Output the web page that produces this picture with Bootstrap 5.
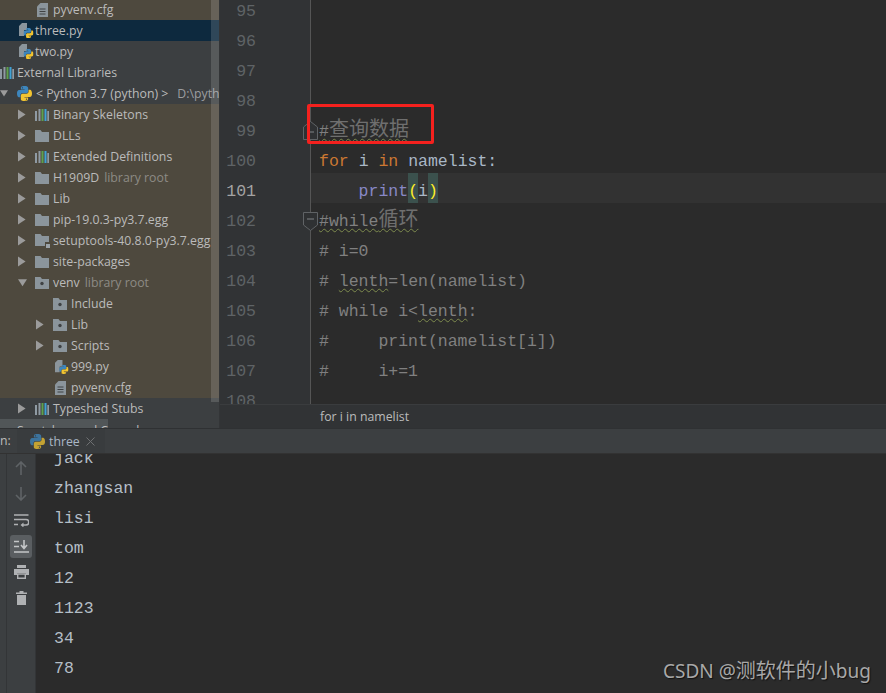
<!DOCTYPE html>
<html lang="en">
<head>
<meta charset="utf-8">
<title>PyCharm</title>
<link rel="stylesheet" href="https://cdn.jsdelivr.net/npm/bootstrap@5.3.0/dist/css/bootstrap.min.css">
<style>
html,body{margin:0;background:#2b2b2b;overflow:hidden}
.ide{width:886px;height:693px;overflow:hidden;position:relative;font-family:"Open Sans","Noto Sans CJK SC",sans-serif;color:#bbb}
.top-area{height:429px;flex:none;border-bottom:1px solid #2f3133}
.tree{width:220px;flex:none;background:#3c3f41;overflow:hidden;position:relative;border-right:1px solid #333537;padding-top:0}
.tree-scroll{position:absolute;left:211px;top:0;width:8px;height:402px;background:rgba(255,255,255,.14)}
.node{height:21px;font-size:12.3px;line-height:21px;white-space:nowrap;flex:none}
.node:first-child{margin-top:-1px}
.brown{background:#4e493e}
.sel{background:#0d293e}
.ind-0{padding-left:0}.ind-1{padding-left:18px}.ind-1f{padding-left:35px}.ind-2{padding-left:36px}.ind-2f{padding-left:53px}
.slot-ar{width:17px;flex:none;display:flex;align-items:center}
.slot-ic{width:18px;flex:none;display:flex;align-items:center}
.slot-ic-lib{width:17px}
.slot-ic-py{width:19px}
.ic-lead{margin-left:2px}
.ic-near{margin-left:1px}
.hint{color:#8d8b85;margin-left:5px}
.hint-py{color:#9b9da0;margin-left:9px}
.scratch{background:#515658;width:108px;padding-left:17px;line-height:24px}
.editor{flex:1;min-width:0;display:flex;flex-direction:column;position:relative}
.editor-body{height:404px;flex:none;overflow:hidden;position:relative;background:#2b2b2b}
.gut-fill{position:absolute;left:0;top:0;bottom:0;width:91px;background:#313335;border-right:1px solid #555}
.lines{position:relative;margin-top:-7px}
.cl{height:30px;line-height:38px;font-family:"Liberation Mono","Noto Sans CJK SC",monospace;font-size:16.5px;white-space:pre;display:flex}
.ln{width:36px;margin-right:55px;flex:none;text-align:right;color:#5f6366}
.code{flex:1;padding-left:8px;color:#808080}
.cur .code{background:#323232}
.cur .ln{color:#a4a3a3}
.kw{color:#cc7832}.id{color:#a9b7c6}.bi{color:#8888c6}
.br{background:#3b514d;color:#ffef28;display:inline-block;height:30px;line-height:38px;vertical-align:top}
.cjk{font-size:20px;line-height:1;font-family:"Noto Sans CJK SC",sans-serif;color:#6f6f6f}
.wavy{text-decoration:underline wavy #7d8a4d 1px;text-underline-offset:2px}
.crumb{height:24px;flex:none;background:#313335;border-top:1px solid #3a3c3e;font-size:12.3px;line-height:23px;padding-left:100px;color:#bbb}
.fold{position:absolute;left:83px;width:15px;height:19px}
.fold-a{top:121px}
.fold-b{top:212px}
.redbox{position:absolute;left:87px;top:104px;width:127px;height:40px;border:3px solid #f5211e;border-radius:2px}
.tabbar{height:24px;flex:none;background:#3c3f41;border-bottom:1px solid #323232;font-size:12.3px;line-height:23px;box-sizing:content-box}
.run-lbl{width:17px;flex:none}
.run-tab{width:88px;flex:none;background:#393c3e;padding-left:13px;gap:4px}
.run-tab .tname{color:#a9b7c6}
.x-ic{margin-left:2px}
.run{flex:1;min-height:0}
.strip{width:7px;flex:none;background:#3c3f41;border-right:1px solid #333537}
.tools{width:29px;flex:none;background:#3c3f41;border-right:1px solid #333537;padding-top:1px}
.tool{width:22px;height:23px;margin:1.5px 0;display:flex;align-items:center;justify-content:center;border-radius:3px}
.tool-on{background:#5a5e61}
.out{flex:1;background:#2b2b2b;overflow:hidden;padding-left:18px}
.outl{height:30px;line-height:31px;font-family:"Liberation Mono",monospace;font-size:16.5px;color:#b4bec7}
.outl:first-child{margin-top:-11px}
.mark-w{position:absolute;left:663px;top:658px;font-size:19px;line-height:26px;color:#a8a8a8;white-space:nowrap;font-family:"Noto Sans","Noto Sans CJK SC",sans-serif;text-shadow:1px 1px 1px #111}
.mark-cjk{font-size:20px}
</style>
</head>
<body>
<svg width="0" height="0" class="position-absolute">
<defs>
<symbol id="arr" viewBox="0 0 9 11"><path d="M0 0l8.5 5.5L0 11z" fill="#9b9b9b"/></symbol>
<symbol id="arrd" viewBox="0 0 11 9"><path d="M0 0h11L5.5 8.5z" fill="#9b9b9b"/></symbol>
<symbol id="lib" viewBox="0 0 14 14">
<rect x="0" y="3" width="2" height="10" fill="#8f9aa3"/><rect x="3.5" y="1" width="2" height="12" fill="#8f9aa3"/><rect x="6.5" y="1" width="2" height="12" fill="#5fa14d"/><rect x="9.5" y="1" width="2" height="12" fill="#40a2d6"/><rect x="12.3" y="3" width="1.7" height="10" fill="#8f9aa3"/>
</symbol>
<symbol id="fol" viewBox="0 0 14 12"><path d="M0 0h5.5l1.5 2h7v10H0z" fill="#8b959c"/></symbol>
<symbol id="fdot" viewBox="0 0 14 12"><path d="M0 0h5.5l1.5 2h7v10H0z" fill="#8b959c"/><circle cx="7" cy="6.5" r="1.7" fill="#3f4244"/></symbol>
<symbol id="flock" viewBox="0 0 15 14"><path d="M0 0h5.5l1.5 2h7v10H0z" fill="#8b959c"/><rect x="10" y="8" width="5" height="6" fill="#4e493e"/><rect x="11" y="10" width="4" height="4" fill="#9ba3a9"/></symbol>
<symbol id="cfg" viewBox="0 0 11 14"><path d="M3.5 0H11v14H0V3.5z" fill="#8b959c"/><path d="M2.5 6h6M2.5 8.5h6M2.5 11h6" stroke="#3f4244" stroke-width="1"/></symbol>
<symbol id="logo" viewBox="0 0 110 110">
<path fill="#3d86bd" d="M54.9 0C26.8 0 28.6 12.2 28.6 12.2v12.6h26.8v3.8H18S0 26.6 0 55s15.7 27.4 15.7 27.4h9.4V69.2s-.5-15.7 15.4-15.7h26.6s14.9.2 14.9-14.4V14.9S84.4 0 54.9 0zM40.1 8.5a4.8 4.8 0 1 1 0 9.6 4.8 4.8 0 0 1 0-9.6z"/>
<path fill="#f2c430" d="M55.1 110c28.1 0 26.3-12.2 26.3-12.2V85.2H54.6v-3.8H92s18 2 18-26.4-15.7-27.4-15.7-27.4h-9.4v13.2s.5 15.7-15.4 15.7H42.9s-14.9-.2-14.9 14.4v24.2S25.6 110 55.1 110zm14.8-8.5a4.8 4.8 0 1 1 0-9.6 4.8 4.8 0 0 1 0 9.6z"/>
</symbol>
<symbol id="pyf" viewBox="0 0 15 15">
<path d="M3 0h5v7H5v6H0V3z" fill="#8b959c"/>
<svg x="4" y="5" width="11" height="10" viewBox="0 0 110 110"><use href="#logo"/></svg>
</symbol>
</defs>
</svg>
<div class="ide d-flex flex-column">
  <div class="top-area d-flex">
    <div class="tree d-flex flex-column">
      <div class="node d-flex brown ind-1f"><span class="slot-ic"><svg class="ic-lead" width="11" height="14"><use href="#cfg"/></svg></span>pyvenv.cfg</div>
      <div class="node d-flex sel ind-1"><span class="slot-ic slot-ic-lib"><svg class="ic-near" width="15" height="15"><use href="#pyf"/></svg></span>three.py</div>
      <div class="node d-flex ind-1"><span class="slot-ic slot-ic-lib"><svg class="ic-near" width="15" height="15"><use href="#pyf"/></svg></span>two.py</div>
      <div class="node d-flex ind-0"><span class="slot-ic slot-ic-lib"><svg width="14" height="14"><use href="#lib"/></svg></span>External Libraries</div>
      <div class="node d-flex ind-0"><span class="slot-ar"><svg width="8" height="7"><use href="#arrd"/></svg></span><span class="slot-ic slot-ic-py"><svg width="15" height="15"><use href="#logo"/></svg></span>&lt; Python 3.7 (python) &gt;<span class="hint-py">D:\python\python.exe</span></div>
      <div class="node d-flex brown ind-1"><span class="slot-ar"><svg width="8" height="11"><use href="#arr"/></svg></span><span class="slot-ic"><svg width="14" height="14"><use href="#lib"/></svg></span>Binary Skeletons</div>
      <div class="node d-flex brown ind-1"><span class="slot-ar"><svg width="8" height="11"><use href="#arr"/></svg></span><span class="slot-ic"><svg width="14" height="12"><use href="#fol"/></svg></span>DLLs</div>
      <div class="node d-flex brown ind-1"><span class="slot-ar"><svg width="8" height="11"><use href="#arr"/></svg></span><span class="slot-ic"><svg width="14" height="14"><use href="#lib"/></svg></span>Extended Definitions</div>
      <div class="node d-flex brown ind-1"><span class="slot-ar"><svg width="8" height="11"><use href="#arr"/></svg></span><span class="slot-ic"><svg width="14" height="12"><use href="#fol"/></svg></span>H1909D<span class="hint">library root</span></div>
      <div class="node d-flex brown ind-1"><span class="slot-ar"><svg width="8" height="11"><use href="#arr"/></svg></span><span class="slot-ic"><svg width="14" height="12"><use href="#fol"/></svg></span>Lib</div>
      <div class="node d-flex brown ind-1"><span class="slot-ar"><svg width="8" height="11"><use href="#arr"/></svg></span><span class="slot-ic"><svg width="14" height="12"><use href="#fol"/></svg></span>pip-19.0.3-py3.7.egg</div>
      <div class="node d-flex brown ind-1"><span class="slot-ar"><svg width="8" height="11"><use href="#arr"/></svg></span><span class="slot-ic"><svg width="15" height="14"><use href="#flock"/></svg></span>setuptools-40.8.0-py3.7.egg</div>
      <div class="node d-flex brown ind-1"><span class="slot-ar"><svg width="8" height="11"><use href="#arr"/></svg></span><span class="slot-ic"><svg width="14" height="12"><use href="#fol"/></svg></span>site-packages</div>
      <div class="node d-flex brown ind-1"><span class="slot-ar"><svg width="9" height="8"><use href="#arrd"/></svg></span><span class="slot-ic"><svg width="14" height="12"><use href="#fdot"/></svg></span>venv<span class="hint">library root</span></div>
      <div class="node d-flex brown ind-2f"><span class="slot-ic"><svg width="14" height="12"><use href="#fdot"/></svg></span>Include</div>
      <div class="node d-flex brown ind-2"><span class="slot-ar"><svg width="8" height="11"><use href="#arr"/></svg></span><span class="slot-ic"><svg width="14" height="12"><use href="#fdot"/></svg></span>Lib</div>
      <div class="node d-flex brown ind-2"><span class="slot-ar"><svg width="8" height="11"><use href="#arr"/></svg></span><span class="slot-ic"><svg width="14" height="12"><use href="#fdot"/></svg></span>Scripts</div>
      <div class="node d-flex brown ind-2f"><span class="slot-ic"><svg class="ic-lead" width="14" height="14"><use href="#pyf"/></svg></span>999.py</div>
      <div class="node d-flex brown ind-2f"><span class="slot-ic"><svg class="ic-lead" width="11" height="14"><use href="#cfg"/></svg></span>pyvenv.cfg</div>
      <div class="node d-flex ind-1"><span class="slot-ar"><svg width="8" height="11"><use href="#arr"/></svg></span><span class="slot-ic"><svg width="14" height="14"><use href="#lib"/></svg></span>Typeshed Stubs</div>
      <div class="node scratch">Scratches and Consoles</div>
      <div class="tree-scroll"></div>
    </div>
    <div class="editor">
      <div class="editor-body">
        <div class="gut-fill"></div>
        <div class="lines">
          <div class="cl"><span class="ln">95</span><span class="code"></span></div>
          <div class="cl"><span class="ln">96</span><span class="code"></span></div>
          <div class="cl"><span class="ln">97</span><span class="code"></span></div>
          <div class="cl"><span class="ln">98</span><span class="code"></span></div>
          <div class="cl"><span class="ln">99</span><span class="code"><span class="wavy">#<span class="cjk">查询数据</span></span></span></div>
          <div class="cl"><span class="ln">100</span><span class="code"><span class="kw">for</span> <span class="id">i</span> <span class="kw">in</span> <span class="id">namelist:</span></span></div>
          <div class="cl cur"><span class="ln">101</span><span class="code">    <span class="bi">print</span><span class="br">(</span><span class="id">i</span><span class="br">)</span></span></div>
          <div class="cl"><span class="ln">102</span><span class="code"><span class="wavy">#while<span class="cjk">循环</span></span></span></div>
          <div class="cl"><span class="ln">103</span><span class="code"># i=0</span></div>
          <div class="cl"><span class="ln">104</span><span class="code"># <span class="wavy">lenth</span>=len(namelist)</span></div>
          <div class="cl"><span class="ln">105</span><span class="code"># while i&lt;<span class="wavy">lenth</span>:</span></div>
          <div class="cl"><span class="ln">106</span><span class="code">#     print(namelist[i])</span></div>
          <div class="cl"><span class="ln">107</span><span class="code">#     i+=1</span></div>
          <div class="cl"><span class="ln">108</span><span class="code"></span></div>
        </div>
        <svg class="fold fold-a" viewBox="0 0 15 19"><path d="M.5 18.5V6L7.5.5l7 5.5v12.5z" fill="#2f3133" stroke="#606366"/><path d="M4 11h7" stroke="#808487"/></svg>
        <svg class="fold fold-b" viewBox="0 0 15 19"><path d="M.5.5v12.5l7 5.5 7-5.5V.5z" fill="#2f3133" stroke="#606366"/><path d="M4 7h7" stroke="#808487"/></svg>
        <div class="redbox"></div>
      </div>
      <div class="crumb">for i in namelist</div>
    </div>
  </div>
  <div class="tabbar d-flex">
    <div class="run-lbl overflow-hidden"><span class="d-block text-end pe-2">n:</span></div>
    <div class="run-tab d-flex align-items-center"><svg width="15" height="15" class="opacity-75"><use href="#logo"/></svg><span class="tname">three</span><svg width="9" height="9" viewBox="0 0 9 9" class="x-ic"><path d="M.5.5l8 8M8.5.5l-8 8" stroke="#6e7072" fill="none"/></svg></div>
  </div>
  <div class="run d-flex">
    <div class="strip"></div>
    <div class="tools d-flex flex-column align-items-center">
      <div class="tool"><svg width="12" height="14" viewBox="0 0 12 14"><path d="M6 14V1M1 6l5-5 5 5" stroke="#5f6366" stroke-width="1.6" fill="none"/></svg></div>
      <div class="tool"><svg width="12" height="14" viewBox="0 0 12 14"><path d="M6 0v13M1 8l5 5 5-5" stroke="#5f6366" stroke-width="1.6" fill="none"/></svg></div>
      <div class="tool"><svg width="15" height="13" viewBox="0 0 15 13"><path d="M0 1h14.5M0 5.5h12a2.5 2.5 0 0 1 0 5.5H8M0 10.5h4" stroke="#afb1b3" stroke-width="1.5" fill="none"/><path d="M9.5 8.5v5L6.5 11z" fill="#afb1b3"/></svg></div>
      <div class="tool tool-on"><svg width="15" height="13" viewBox="0 0 15 13"><path d="M0 1.5h5M0 6.5h5M0 12h15M10 0v8M7 5l3 3.5L13 5" stroke="#c4c6c8" stroke-width="1.6" fill="none"/></svg></div>
      <div class="tool"><svg width="15" height="14" viewBox="0 0 15 14"><path d="M3 0h9v3H3z" fill="#afb1b3"/><path d="M0 4h15v6h-3V8H3v2H0z" fill="#afb1b3"/><path d="M3.7 9h7.6v4.3H3.7z" fill="none" stroke="#afb1b3" stroke-width="1.4"/></svg></div>
      <div class="tool"><svg width="11" height="14" viewBox="0 0 11 14"><path d="M0 1.5h11V3H0zM3.5 0h4v1.5h-4zM1 4h9v10H1z" fill="#afb1b3"/></svg></div>
    </div>
    <div class="out">
      <div class="outl">jack</div>
      <div class="outl">zhangsan</div>
      <div class="outl">lisi</div>
      <div class="outl">tom</div>
      <div class="outl">12</div>
      <div class="outl">1123</div>
      <div class="outl">34</div>
      <div class="outl">78</div>
    </div>
  </div>
  <div class="mark-w">CSDN @<span class="mark-cjk">测软件的小</span>bug</div>
</div>
<script src="https://cdn.jsdelivr.net/npm/bootstrap@5.3.0/dist/js/bootstrap.bundle.min.js"></script>
</body>
</html>
